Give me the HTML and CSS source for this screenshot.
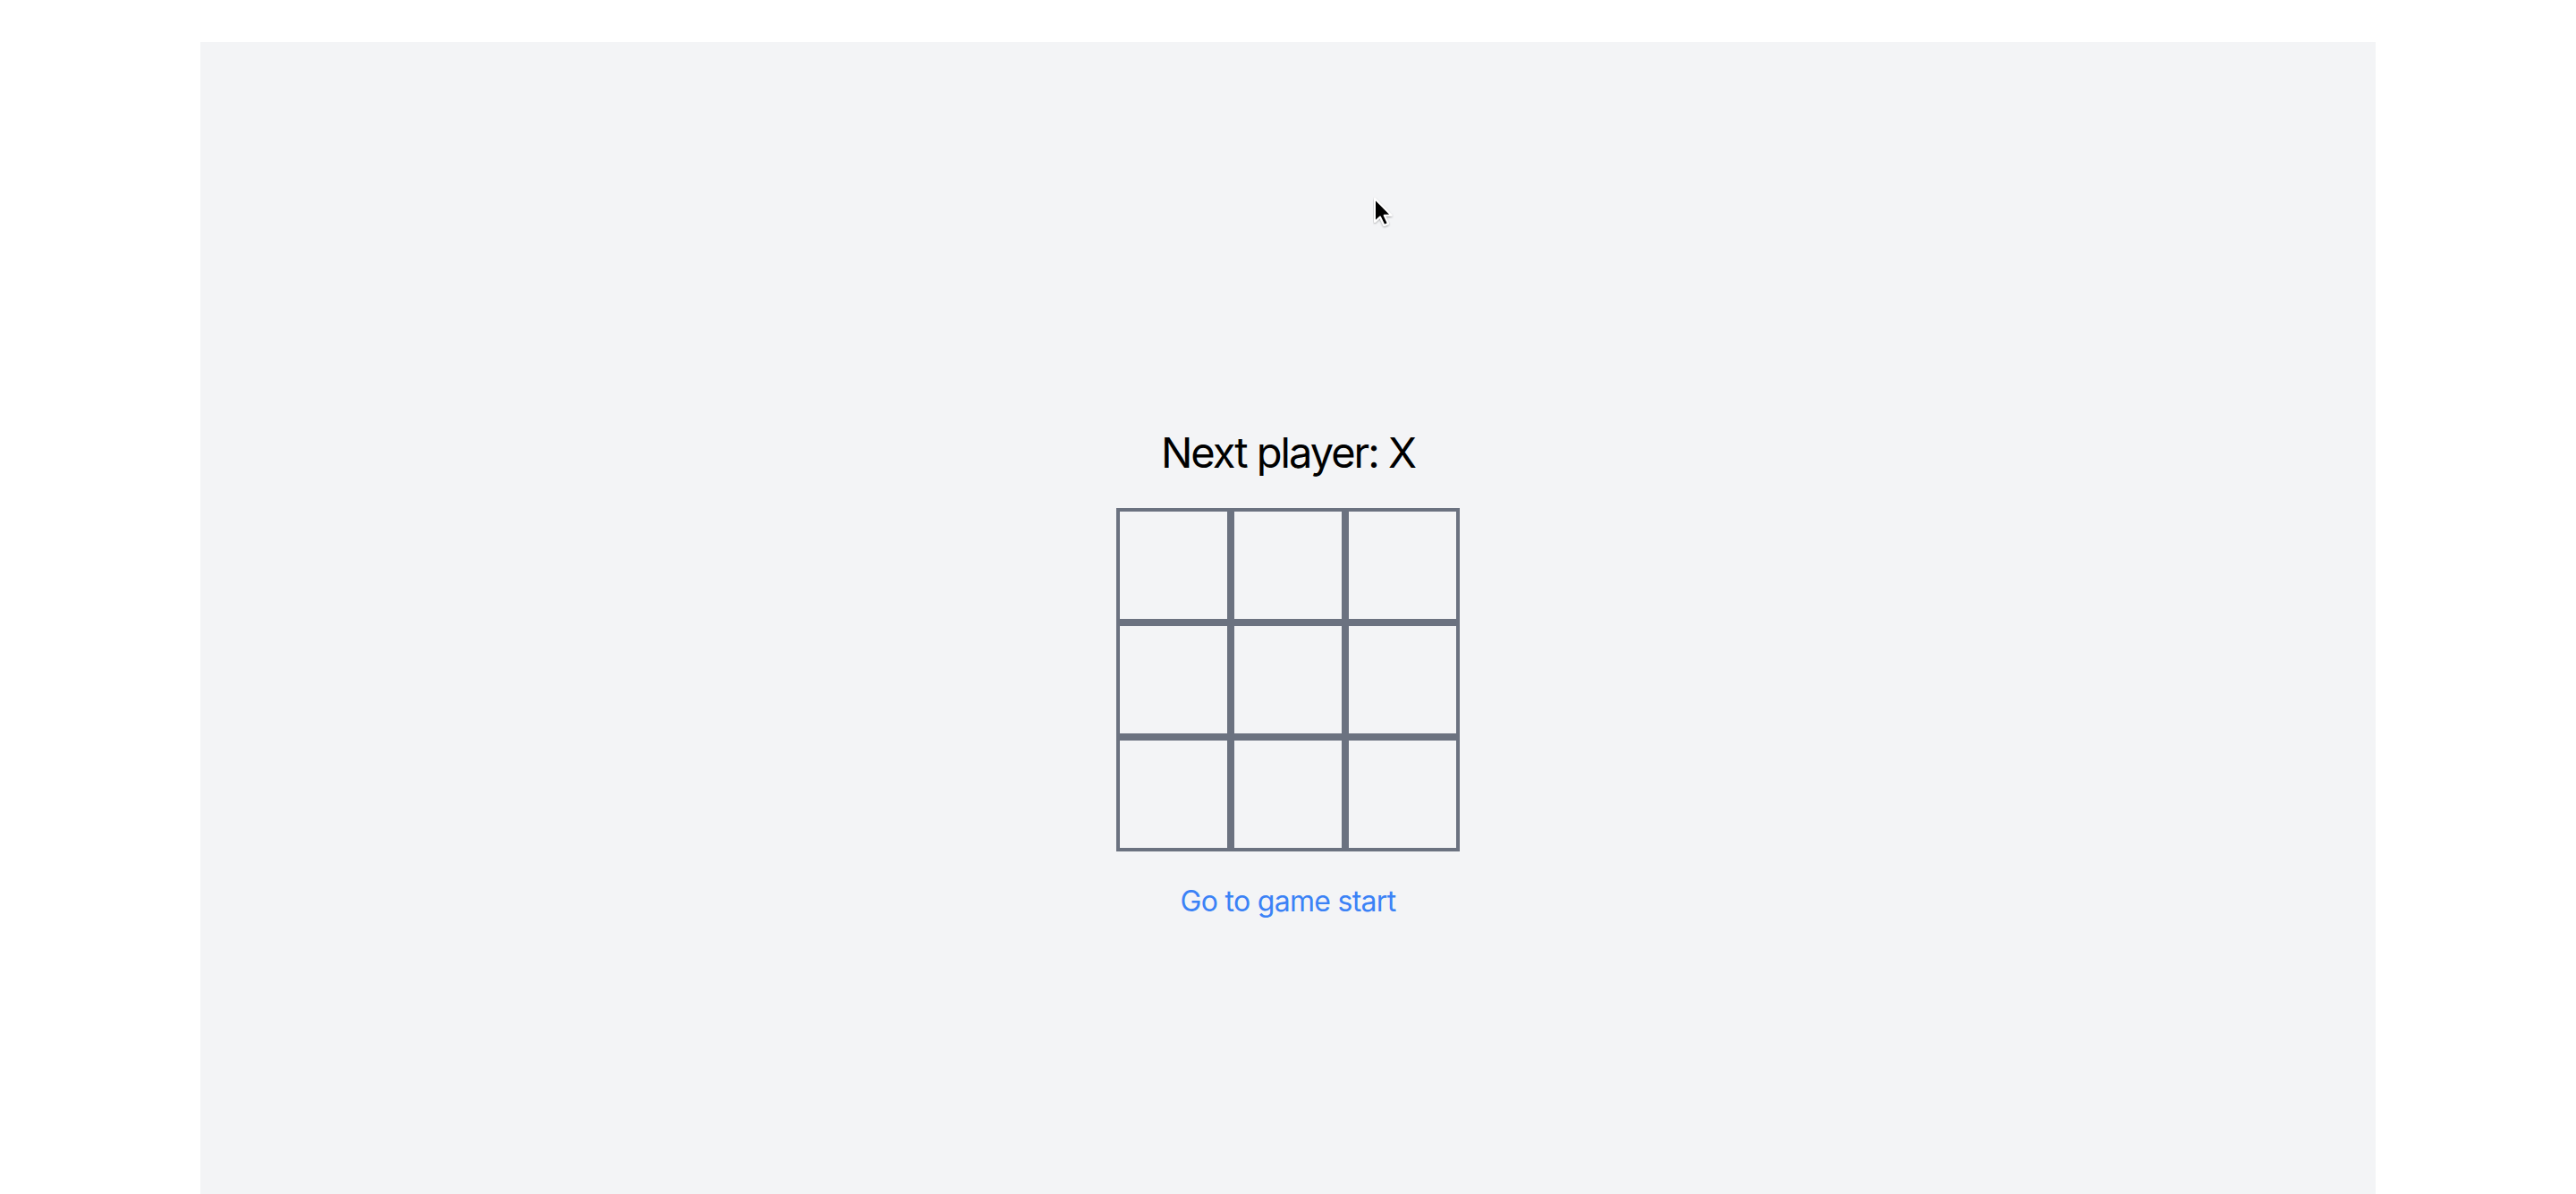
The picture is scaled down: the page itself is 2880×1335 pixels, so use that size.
FILE: index.html
```html
<!DOCTYPE html>
<html lang="en">
<head>
<meta charset="utf-8">
<title>Tic Tac Toe</title>
<link rel="stylesheet" href="styles.css">
</head>
<body>
<main class="frame">
  <div class="game">
    <h1 class="status">Next player: X</h1>
    <div class="board">
      <button class="cell"></button>
      <button class="cell"></button>
      <button class="cell"></button>
      <button class="cell"></button>
      <button class="cell"></button>
      <button class="cell"></button>
      <button class="cell"></button>
      <button class="cell"></button>
      <button class="cell"></button>
    </div>
    <a class="history" href="#">Go to game start</a>
  </div>
</main>
<svg class="pointer" width="30" height="40" viewBox="0 0 30 40" aria-hidden="true">
  <defs>
    <filter id="sh" x="-30%" y="-30%" width="160%" height="160%">
      <feDropShadow dx="0" dy="1" stdDeviation="1" flood-color="#000" flood-opacity="0.35"/>
    </filter>
  </defs>
  <path d="M2 2 L2 28 L8 22.5 L12.5 32 L17 30 L12.6 20.8 L20.5 20.8 Z" fill="#000" stroke="#fff" stroke-width="2" stroke-linejoin="round" filter="url(#sh)"/>
</svg>
</body>
</html>
```
FILE: styles.css
```css
html, body {
  margin: 0;
  padding: 0;
  background: #ffffff;
}
body {
  font-family: Inter, "Noto Sans", "Liberation Sans", sans-serif;
  height: 1335px;
  overflow: hidden;
  position: relative;
}
.frame {
  margin: 47px 0 0 224px;
  width: 2432px;
  height: 1288px;
  background: #f3f4f6;
  box-sizing: border-box;
  padding-top: 425px;
}
.game {
  display: flex;
  flex-direction: column;
  align-items: center;
}
.status {
  margin: 0 0 32px 0;
  font-size: 47px;
  line-height: 64px;
  font-weight: 400;
  color: #000;
  letter-spacing: -2px;
  position: relative;
  top: 2px;
}
.board {
  display: grid;
  grid-template-columns: repeat(3, 128px);
  grid-template-rows: repeat(3, 128px);
}
.cell {
  box-sizing: border-box;
  width: 128px;
  height: 128px;
  border: 4px solid #6b7280;
  background: transparent;
  padding: 0;
  margin: 0;
}
.history {
  margin-top: 32px;
  font-size: 32px;
  line-height: 48px;
  color: #3b82f6;
  text-decoration: none;
  letter-spacing: -0.7px;
}
.pointer {
  position: absolute;
  left: 1535px;
  top: 220px;
}
```
